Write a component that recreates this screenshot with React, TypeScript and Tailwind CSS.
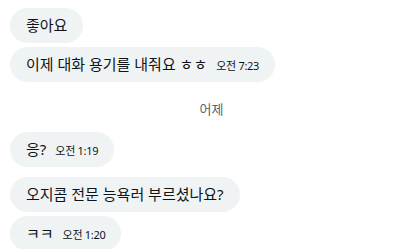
import React from 'react';

type Msg = { text: string; time?: string };

const font = { fontFamily: '"Noto Sans", "Noto Sans CJK KR", sans-serif' };

function Bubble({ text, time }: Msg) {
  return (
    <div className="flex">
      <div className="flex items-end rounded-[18px] bg-[#eff3f4] px-4 py-[7px] text-[#0f1419]">
        <span className="text-[15px] leading-[21px]">{text}</span>
        {time && (
          <span className="ml-[9px] pb-[1px] text-[11px] leading-[16px] tracking-[-0.3px] text-[#0f1419]">{time}</span>
        )}
      </div>
    </div>
  );
}

export default function App() {
  return (
    <div className="h-[249px] w-[407px] overflow-hidden bg-white pl-[10px] pt-[8px]" style={font}>
      <div className="flex flex-col gap-[4px]">
        <Bubble text="좋아요" />
        <Bubble text="이제 대화 용기를 내줘요 ㅎㅎ" time="오전 7:23" />
      </div>
      <div className="flex h-[50px] items-center justify-center pt-[6px] text-[13px] text-[#536471]">
        <span className="ml-[6px]">어제</span>
      </div>
      <div className="flex flex-col gap-[10px]">
        <Bubble text="응?" time="오전 1:19" />
        <div className="flex flex-col gap-[4px]">
          <Bubble text="오지콤 전문 능욕러 부르셨나요?" />
          <Bubble text="ㅋㅋ" time="오전 1:20" />
        </div>
      </div>
    </div>
  );
}
